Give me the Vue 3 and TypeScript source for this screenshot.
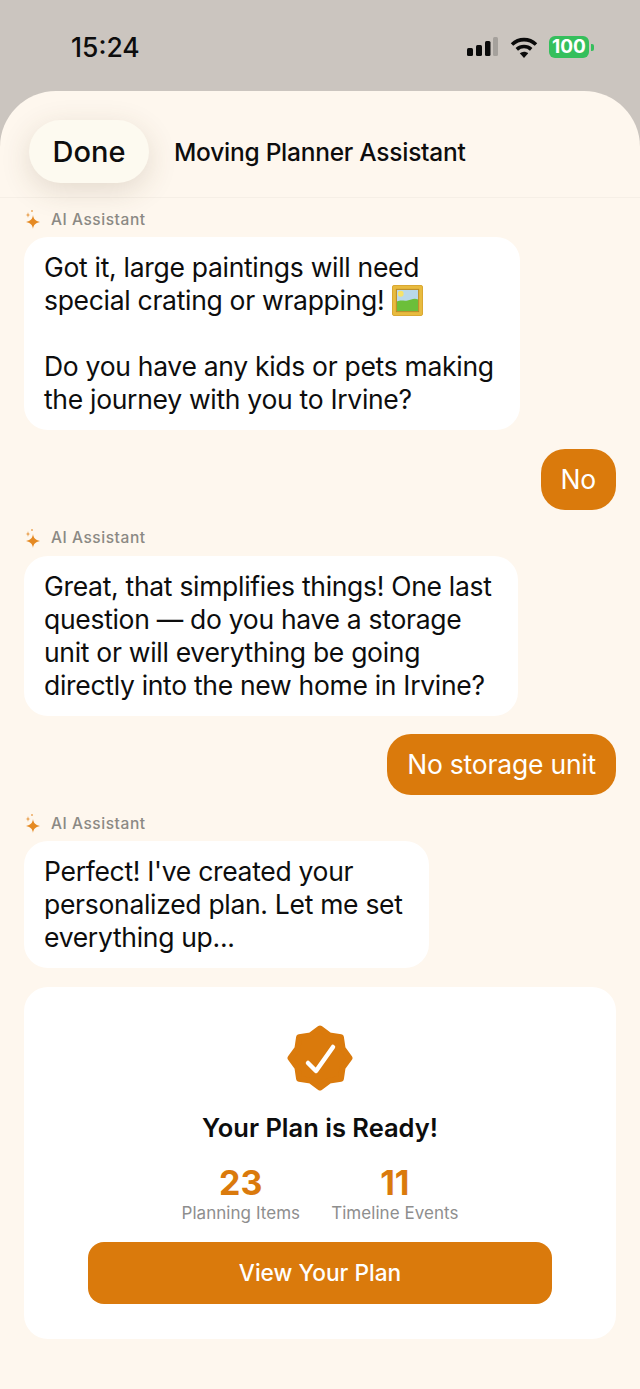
<template>
  <div class="phone">
    <div class="status">
      <span class="status__time">15:24</span>
      <div class="status__icons">
        <svg width="31" height="20" viewBox="0 0 31 20">
          <rect x="0" y="11" width="6" height="8" rx="1.500" fill="#0a0a0a" />
          <rect x="9" y="8" width="6" height="11" rx="1.500" fill="#0a0a0a" />
          <rect x="18" y="4" width="5.500" height="15" rx="1.500" fill="#0a0a0a" />
          <rect x="26" y="0" width="5" height="19" rx="1.500" fill="#a5a19c" />
        </svg>
        <svg class="status__wifi" width="28" height="21" viewBox="0 0 28 21">
          <path d="M2 7.500C9 1 19 1 26 7.500" fill="none" stroke="#0a0a0a" stroke-width="3.600" />
          <path d="M6.800 12.400c4.200-3.800 10.200-3.800 14.400 0" fill="none" stroke="#0a0a0a" stroke-width="3.600" />
          <path d="M9.800 16.200c2.600-2 5.800-2 8.400 0L14 21z" fill="#0a0a0a" />
        </svg>
        <div class="battery">100</div>
        <span class="battery__cap"></span>
      </div>
    </div>

    <div class="sheet">
      <header class="header">
        <button class="done">Done</button>
        <span class="header__title">Moving Planner Assistant</span>
      </header>

      <main class="chat">
        <template v-for="(msg, i) in messages" :key="i">
          <div v-if="msg.from === 'ai'" class="ai">
            <div class="ai__label">
              <svg width="18" height="20" viewBox="0 0 18 20">
                <path d="M9 6c.6 4 2 5.800 7 7-5 1.200-6.400 3-7 7-.6-4-2-5.800-7-7 5-1.200 6.400-3 7-7z" fill="#e58a23" />
                <path d="M4 3c.3 2 .8 2.600 2.500 3C4.800 6.400 4.300 7 4 9 3.700 7 3.200 6.400 1.500 6 3.200 5.600 3.700 5 4 3z" fill="#ecab62" />
                <circle cx="8" cy="2" r="1" fill="#ecab62" />
              </svg>
              <span>AI Assistant</span>
            </div>
            <div class="bubble">
              <p v-for="(line, j) in msg.lines" :key="j" class="bubble__line">
                {{ line }}
                <svg v-if="line.endsWith('wrapping!')" class="painting" width="31" height="31" viewBox="0 0 32 32">
                  <rect x="0.500" y="0.500" width="31" height="31" rx="1.500" fill="#e8bb3f" stroke="#d9a52e" />
                  <rect x="5" y="5" width="22" height="22" fill="#b9d8ea" />
                  <circle cx="9" cy="9" r="3" fill="#f6e36a" />
                  <path d="M5 17c5-2 7 0 11-1s7-3 11-1v12H5z" fill="#6cbf3a" />
                  <rect x="4.500" y="4.500" width="23" height="23" fill="none" stroke="#b98a25" stroke-width="1" />
                </svg>
              </p>
            </div>
          </div>
          <div v-else class="user">{{ msg.text }}</div>
        </template>

        <section class="card">
          <svg class="card__badge" width="66" height="66" viewBox="0 0 66 66">
            <path :d="badgePath" fill="#da7a0c" stroke="#da7a0c" stroke-width="6" stroke-linejoin="round" />
            <path d="M21 38l8 8 17-24" fill="none" stroke="#fff" stroke-width="4.500" stroke-linecap="round" stroke-linejoin="round" />
          </svg>
          <h2 class="card__title">Your Plan is Ready!</h2>
          <div class="stats">
            <div v-for="stat in stats" :key="stat.label" class="stat">
              <span class="stat__value">{{ stat.value }}</span>
              <span class="stat__label">{{ stat.label }}</span>
            </div>
          </div>
          <button class="view">View Your Plan</button>
        </section>
      </main>
    </div>
  </div>
</template>

<script setup lang="ts">
type Message =
  | { from: 'ai'; lines: string[] }
  | { from: 'user'; text: string };

const messages: Message[] = [
  {
    from: 'ai',
    lines: [
      'Got it, large paintings will need',
      'special crating or wrapping!',
      '\u00a0',
      'Do you have any kids or pets making',
      'the journey with you to Irvine?',
    ],
  },
  { from: 'user', text: 'No' },
  {
    from: 'ai',
    lines: [
      'Great, that simplifies things! One last',
      'question — do you have a storage',
      'unit or will everything be going',
      'directly into the new home in Irvine?',
    ],
  },
  { from: 'user', text: 'No storage unit' },
  {
    from: 'ai',
    lines: [
      "Perfect! I've created your",
      'personalized plan. Let me set',
      'everything up...',
    ],
  },
];

const stats = [
  { value: '23', label: 'Planning Items' },
  { value: '11', label: 'Timeline Events' },
];

// scalloped badge outline, 8 lobes
const badgePath = Array.from({ length: 16 }, (_, i) => {
  const r = i % 2 === 0 ? 29.5 : 24.5;
  const a = (i * Math.PI) / 8 - Math.PI / 2;
  const x = 33 + r * Math.cos(a);
  const y = 33 + r * Math.sin(a);
  return `${i === 0 ? 'M' : 'L'}${x.toFixed(1)} ${y.toFixed(1)}`;
}).join('') + 'Z';
</script>

<style>
body {
  margin: 0;
  background: #cbc5bf;
}
</style>

<style scoped>
.phone {
  min-height: 100vh;
  display: flex;
  flex-direction: column;
  font-family: Inter, "Liberation Sans", sans-serif;
  color: #0d0d0d;
}

.status {
  height: 91px;
  box-sizing: border-box;
  display: flex;
  justify-content: space-between;
  align-items: center;
  padding: 0 46px 0 71px;
}

.status__time {
  font-size: 26.500px;
  font-weight: 500;
  line-height: 30px;
  margin-top: 3px;
}

.status__icons {
  display: flex;
  align-items: center;
  margin-top: 3px;
}

.status__wifi {
  margin-left: 12px;
}

.battery {
  width: 40px;
  height: 22px;
  margin-left: 11px;
  border-radius: 6px;
  background: #35bf5c;
  color: #fff;
  font-size: 19px;
  font-weight: 700;
  line-height: 22px;
  text-align: center;
}

.battery__cap {
  width: 3px;
  height: 7px;
  margin-left: 2px;
  border-radius: 0 2px 2px 0;
  background: #35bf5c;
}

.sheet {
  flex: 1;
  background: #fef7ee;
  border-radius: 56px 56px 0 0;
}

.header {
  height: 107px;
  box-sizing: border-box;
  display: flex;
  align-items: flex-start;
  gap: 25px;
  padding: 29px 29px 0;
  border-bottom: 1px solid #f6efe6;
}

.done {
  width: 120px;
  height: 63px;
  padding: 0;
  border: none;
  border-radius: 32px;
  background: #fdfaf0;
  box-shadow: 0 8px 30px rgba(90, 70, 40, 0.16);
  color: #0d0d0d;
  font-family: inherit;
  font-size: 29px;
  font-weight: 500;
}

.header__title {
  font-size: 24.500px;
  font-weight: 500;
  letter-spacing: -0.25px;
  line-height: 65px;
}

.chat {
  display: flex;
  flex-direction: column;
  padding: 12px 24px 0;
}

.ai {
  display: flex;
  flex-direction: column;
  align-items: flex-start;
  margin-bottom: 18.750px;
}

.ai__label {
  height: 20px;
  display: flex;
  align-items: center;
  gap: 9px;
  margin-top: -1px;
  margin-bottom: 8px;
  color: #8b8984;
  font-size: 15.500px;
  font-weight: 500;
  letter-spacing: 0.55px;
}

.bubble {
  padding: 14px 26px 14px 20px;
  border-radius: 24px;
  background: #fff;
  font-size: 26.500px;
  letter-spacing: -0.3px;
  line-height: 33px;
  white-space: nowrap;
}

.bubble__line {
  margin: 0;
}

.painting {
  vertical-align: -6px;
  margin-left: 1px;
}

.user {
  align-self: flex-end;
  margin-bottom: 18.750px;
  padding: 14px 20px;
  border-radius: 24px;
  background: #da7a0c;
  color: #fff;
  font-size: 26.500px;
  letter-spacing: -0.21px;
  line-height: 33px;
}

.card {
  display: flex;
  flex-direction: column;
  align-items: center;
  height: 352px;
  box-sizing: border-box;
  padding-top: 38px;
  border-radius: 24px;
  background: #fff;
}

.card__title {
  margin: 20px 0 0;
  font-size: 25.500px;
  font-weight: 600;
  line-height: 34px;
}

.stats {
  display: flex;
  gap: 31px;
  margin-top: 18px;
}

.stat {
  display: flex;
  flex-direction: column;
  align-items: center;
}

.stat__value {
  color: #da7a0c;
  font-size: 34px;
  font-weight: 700;
  line-height: 40px;
}

.stat__label {
  color: #8e8e8e;
  font-size: 17px;
  line-height: 21px;
  letter-spacing: 0.05px;
}

.view {
  width: 464px;
  height: 62px;
  margin-top: 18px;
  border: none;
  border-radius: 16px;
  background: #da7a0c;
  color: #fff;
  font-family: inherit;
  font-size: 22.700px;
  font-weight: 500;
}
</style>
